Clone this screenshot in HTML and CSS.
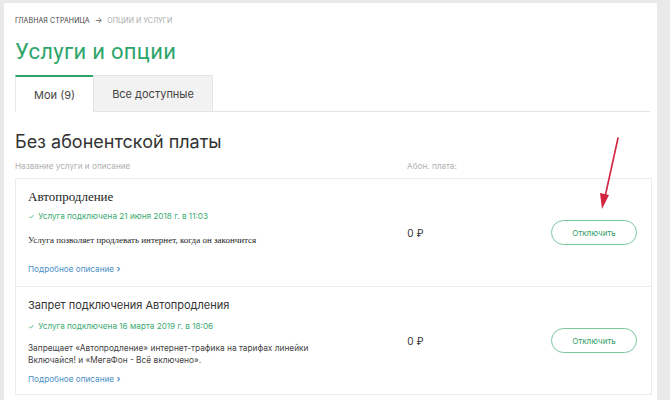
FILE: index.html
```html
<!DOCTYPE html>
<html lang="ru">
<head>
<meta charset="utf-8">
<link rel="stylesheet" href="styles.css">
</head>
<body>
<div class="panel">
  <div class="crumbs"><span class="crumb-home">ГЛАВНАЯ СТРАНИЦА</span><span class="crumb-arrow">→</span><span class="crumb-cur">ОПЦИИ И УСЛУГИ</span></div>
  <h1 class="title">Услуги и опции</h1>
  <div class="tabs">
    <div class="tab tab-active">Мои (9)</div>
    <div class="tab tab-idle">Все доступные</div>
    <div class="tab-rest"></div>
  </div>
  <h2 class="section">Без абонентской платы</h2>
  <div class="cols">
    <div class="col-name">Название услуги и описание</div>
    <div class="col-price">Абон. плата:</div>
  </div>
  <div class="card card1">
    <div class="info">
      <div class="name serif">Автопродление</div>
      <div class="status"><span class="tick">✓</span>Услуга подключена 21 июня 2018 г. в 11:03</div>
      <div class="desc serif-desc">Услуга позволяет продлевать интернет, когда он закончится</div>
      <a class="more">Подробное описание <span class="chev">›</span></a>
    </div>
    <div class="price">0 ₽</div>
    <div class="action"><button class="btn">Отключить</button></div>
  </div>
  <div class="card card2">
    <div class="info">
      <div class="name">Запрет подключения Автопродления</div>
      <div class="status"><span class="tick">✓</span>Услуга подключена 16 марта 2019 г. в 18:06</div>
      <div class="desc">Запрещает «Автопродление» интернет-трафика на тарифах линейки Включайся! и «МегаФон - Всё включено».</div>
      <a class="more">Подробное описание <span class="chev">›</span></a>
    </div>
    <div class="price">0 ₽</div>
    <div class="action"><button class="btn">Отключить</button></div>
  </div>
  <svg class="arrow" width="40" height="90" viewBox="0 0 40 90">
    <line x1="28" y1="3" x2="15" y2="62" stroke="#d2243f" stroke-width="1.6" stroke-linecap="round"/>
    <polygon points="10,58 19,60 12,74" fill="#d2243f"/>
  </svg>
</div>
</body>
</html>
```
FILE: styles.css
```css
* { box-sizing: border-box; }
html, body { margin: 0; padding: 0; }
body {
  background: #e9e9e9;
  width: 670px;
  height: 400px;
  overflow: hidden;
  font-family: "Inter", "Open Sans", "Liberation Sans", sans-serif;
  color: #333;
}
.panel {
  position: relative;
  margin: 3px 13px 0 4px;
  background: #fff;
  height: 397px;
  padding: 11px 5px 0 11px;
}
.crumbs {
  font-size: 7px;
  letter-spacing: 0.1px;
  line-height: 12px;
  height: 12px;
  color: #444;
}
.crumb-arrow { margin: 0 5px; color: #555; font-size: 8px; }
.crumb-cur { color: #a8a8a8; }
.title {
  margin: 12px 0 0 0;
  font-family: "Roboto", "Inter", sans-serif;
  font-size: 22px;
  line-height: 28px;
  font-weight: 400;
  color: #2da56a;
  letter-spacing: 0.3px;
}
.tabs {
  display: flex;
  margin-top: 9px;
  height: 37px;
}
.tab {
  display: flex;
  align-items: center;
  justify-content: center;
  font-size: 11px;
  color: #444;
}
.tab-active {
  width: 78px;
  border-top: 2px solid #2da56a;
  border-left: 1px solid #e6e6e6;
  background: #fff;
}
.tab-idle {
  width: 120px;
  background: #f2f2f2;
  border: 1px solid #e4e4e4;
}
.tab-rest {
  flex: 1;
  border-bottom: 1px solid #e4e4e4;
  margin-right: 2px;
}
.section {
  margin: 19px 0 0 0;
  font-size: 18px;
  line-height: 22px;
  font-weight: 400;
  color: #333;
}
.cols {
  display: flex;
  font-size: 8.2px;
  color: #b0b0b0;
  margin-top: 6px;
  height: 14px;
  line-height: 14px;
}
.col-name { width: 392px; }
.card {
  display: flex;
  align-items: center;
  width: 637px;
  height: 109px;
  border: 1px solid #ececec;
  padding: 0 14px 0 12px;
}
.card1 { margin-top: 5px; }
.card2 { border-top: none; height: 108px; }
.info { width: 380px; align-self: flex-start; }
.card1 .info { padding-top: 10px; }
.card2 .info { padding-top: 10px; }
.name {
  font-size: 11px;
  line-height: 16px;
  color: #333;
}
.serif {
  font-family: "Liberation Serif", serif;
  font-size: 13px;
  color: #222;
}
.status {
  font-size: 8.2px;
  line-height: 12px;
  color: #3daa72;
}
.card1 .status { margin-top: 5px; }
.card2 .status { margin-top: 7px; }
.tick { margin-right: 4px; font-size: 7px; }
.desc {
  margin-top: 9px;
  font-size: 8.3px;
  line-height: 12px;
  color: #444;
  width: 310px;
}
.serif-desc {
  font-family: "Liberation Serif", serif;
  font-size: 9px;
  color: #1a1a1a;
  margin-top: 11px;
  width: auto;
}
.more {
  display: block;
  font-size: 8.2px;
  line-height: 12px;
  color: #4a8fc4;
}
.card1 .more { margin-top: 17px; }
.card2 .more { margin-top: 7px; }
.chev { font-weight: 700; font-size: 9px; }
.price {
  width: 144px;
  font-size: 10px;
  color: #333;
}
.action { flex: 1; display: flex; justify-content: flex-end; }
.btn {
  width: 86px;
  height: 25px;
  border: 1px solid #7cc7a0;
  border-radius: 13px;
  background: #fff;
  color: #2f9e65;
  font-family: "Inter", "Open Sans", "Liberation Sans", sans-serif;
  font-size: 8px;
  padding: 0;
}
.arrow {
  position: absolute;
  left: 586px;
  top: 132px;
}
```
